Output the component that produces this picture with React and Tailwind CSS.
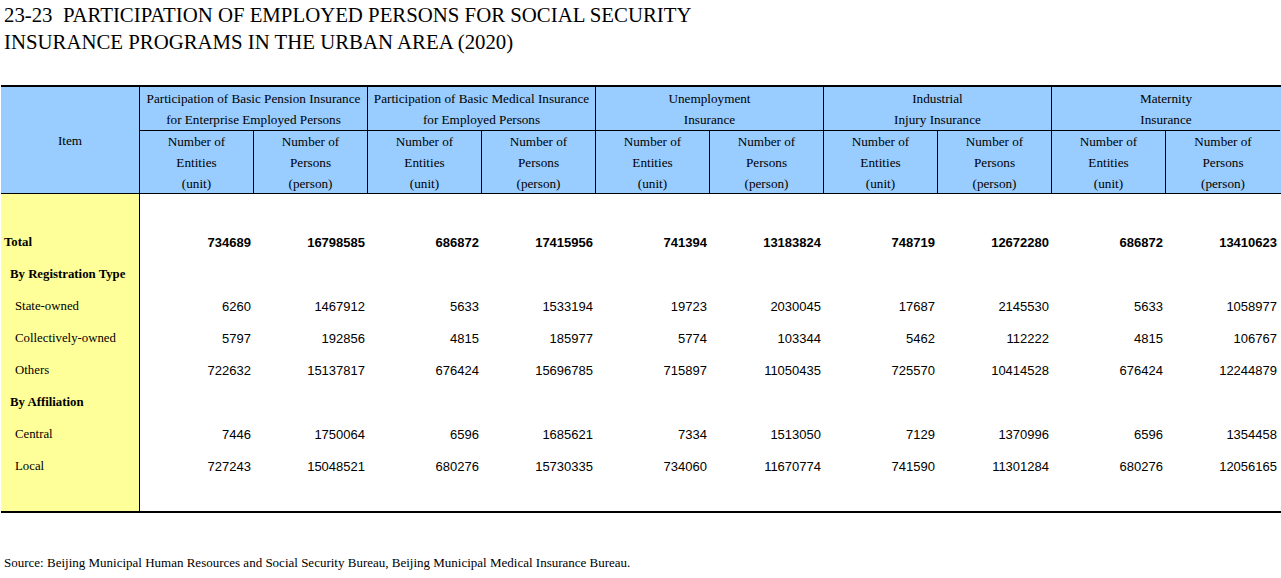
import React from "react";

const groups = [
  ["Participation of Basic Pension Insurance", "for Enterprise Employed Persons"],
  ["Participation of Basic Medical Insurance", "for Employed Persons"],
  ["Unemployment", "Insurance"],
  ["Industrial", "Injury Insurance"],
  ["Maternity", "Insurance"],
];

const rows = [
  { label: "Total", kind: "total", vals: [734689, 16798585, 686872, 17415956, 741394, 13183824, 748719, 12672280, 686872, 13410623] },
  { label: "By Registration Type", kind: "section" },
  { label: "State-owned", kind: "item", vals: [6260, 1467912, 5633, 1533194, 19723, 2030045, 17687, 2145530, 5633, 1058977] },
  { label: "Collectively-owned", kind: "item", vals: [5797, 192856, 4815, 185977, 5774, 103344, 5462, 112222, 4815, 106767] },
  { label: "Others", kind: "item", vals: [722632, 15137817, 676424, 15696785, 715897, 11050435, 725570, 10414528, 676424, 12244879] },
  { label: "By Affiliation", kind: "section" },
  { label: "Central", kind: "item", vals: [7446, 1750064, 6596, 1685621, 7334, 1513050, 7129, 1370996, 6596, 1354458] },
  { label: "Local", kind: "item", vals: [727243, 15048521, 680276, 15730335, 734060, 11670774, 741590, 11301284, 680276, 12056165] },
];

const serif = { fontFamily: '"Liberation Serif", "Times New Roman", serif' };

function Row({ row }) {
  const labelCls =
    row.kind === "total"
      ? "pl-[3px] font-bold"
      : row.kind === "section"
      ? "pl-[9px] font-bold"
      : "pl-[14px]";
  return (
    <div className="flex h-[32px]">
      <div className={`w-[139px] shrink-0 bg-[#ffff99] border-r border-black flex items-center text-[12.8px] ${labelCls}`} style={serif}>
        {row.label}
      </div>
      {Array.from({ length: 10 }).map((_, i) => (
        <div
          key={i}
          className={`w-[114px] shrink-0 flex items-center justify-end pr-[3px] text-[13px] font-['Liberation_Sans',Arial,sans-serif] ${row.kind === "total" ? "font-bold" : ""}`}
        >
          {row.vals ? row.vals[i] : ""}
        </div>
      ))}
    </div>
  );
}

export default function App() {
  return (
    <div className="w-[1281px] h-[578px] bg-white text-black overflow-hidden" style={serif}>
      <div className="pl-[4px] pt-[1px] text-[20.8px] leading-[27px] whitespace-nowrap">
        <div>23-23&nbsp;&nbsp;PARTICIPATION OF EMPLOYED PERSONS FOR SOCIAL SECURITY</div>
        <div>INSURANCE PROGRAMS IN THE URBAN AREA (2020)</div>
      </div>

      <div className="mt-[30px] ml-[1px] w-[1280px] border-t-2 border-b-2 border-black">
        {/* header */}
        <div className="flex bg-[#99ccff] border-b border-black text-[13.2px] leading-[21px] whitespace-nowrap">
          <div className="w-[139px] shrink-0 border-r border-black flex items-center justify-center">Item</div>
          <div className="flex flex-col">
            <div className="flex border-b border-black">
              {groups.map((g, i) => (
                <div key={i} className={`w-[228px] h-[43px] shrink-0 flex flex-col justify-center text-center ${i < 4 ? "border-r border-black" : ""}`}>
                  <div>{g[0]}</div>
                  <div>{g[1]}</div>
                </div>
              ))}
            </div>
            <div className="flex">
              {Array.from({ length: 10 }).map((_, i) => (
                <div key={i} className={`w-[114px] h-[62px] shrink-0 flex flex-col justify-center text-center ${i < 9 ? "border-r border-black" : ""}`}>
                  <div>Number of</div>
                  <div>{i % 2 === 0 ? "Entities" : "Persons"}</div>
                  <div>{i % 2 === 0 ? "(unit)" : "(person)"}</div>
                </div>
              ))}
            </div>
          </div>
        </div>
        {/* body */}
        <div className="flex h-[33px]">
          <div className="w-[139px] shrink-0 bg-[#ffff99] border-r border-black" />
        </div>
        {rows.map((r, i) => (
          <Row key={i} row={r} />
        ))}
        <div className="flex h-[28px]">
          <div className="w-[139px] shrink-0 bg-[#ffff99] border-r border-black" />
        </div>
      </div>

      <div className="mt-[42px] pl-[4px] text-[13px] leading-[16px] whitespace-nowrap">
        Source: Beijing Municipal Human Resources and Social Security Bureau, Beijing Municipal Medical Insurance Bureau.
      </div>
    </div>
  );
}
